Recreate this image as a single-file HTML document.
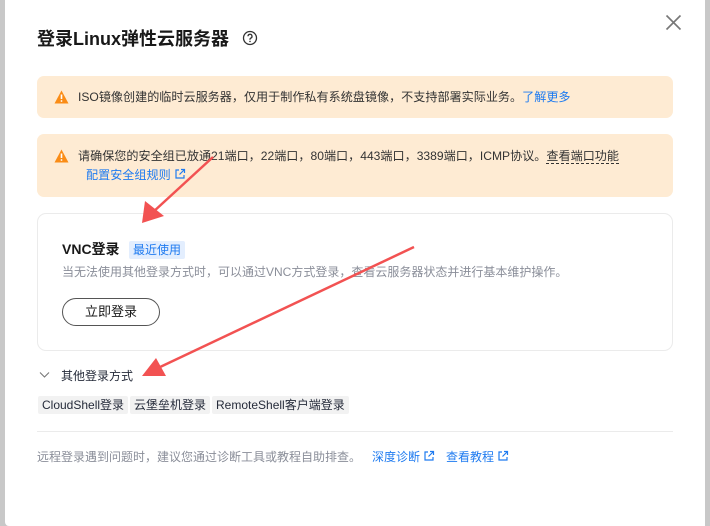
<!DOCTYPE html>
<html><head><meta charset="utf-8"><style>
*{margin:0;padding:0;box-sizing:border-box}
body{width:710px;height:526px;overflow:hidden;background:#c8c8c8;font-family:"Liberation Sans","Noto Sans CJK SC",sans-serif;position:relative;color:#252b3a}
.modal{position:absolute;left:5px;top:0;width:700px;height:526px;background:#fff;border-radius:0 0 0 4px}
.a{position:absolute}
.alert{position:absolute;left:37px;width:636px;background:#feebd3;border-radius:7px;font-size:12.1px;color:#333}
.link{color:#1f7bf0}
.tag{position:absolute;top:396px;height:18px;background:#f2f2f2;font-size:12px;line-height:18px;padding:0 4px;color:#252b3a;border-radius:2px}
</style></head><body>
<div class="modal"></div>
<div class="a" style="left:37px;top:27px;font-size:18px;font-weight:bold;color:#191919;line-height:24px">登录Linux弹性云服务器</div>
<svg class="a" style="left:242px;top:30px" width="16" height="16" viewBox="0 0 16 16"><circle cx="8" cy="8" r="6.5" fill="none" stroke="#333" stroke-width="1.3"/><path d="M6 6.3a2 2 0 1 1 2.6 1.9c-.5.2-.6.5-.6 1v.6" fill="none" stroke="#333" stroke-width="1.3"/><circle cx="8" cy="11.4" r=".8" fill="#333"/></svg>
<svg class="a" style="left:665px;top:14px" width="17" height="17" viewBox="0 0 17 17"><path d="M1.5 1.5L15.5 15.5M15.5 1.5L1.5 15.5" stroke="#777" stroke-width="1.6"/></svg>

<div class="alert" style="top:76px;height:42px">
<svg class="a" style="left:17px;top:14px" width="15" height="14" viewBox="0 0 15 14"><path d="M7.5 0.5L14.5 13.5H0.5Z" fill="#fa8c16"/><path d="M7.5 4.5v4.5" stroke="#fff" stroke-width="1.6"/><circle cx="7.5" cy="11" r=".9" fill="#fff"/></svg>
<div class="a" style="left:41px;top:12px;line-height:18px">ISO镜像创建的临时云服务器，仅用于制作私有系统盘镜像，不支持部署实际业务。<span class="link">了解更多</span></div>
</div>

<div class="alert" style="top:134px;height:63px">
<svg class="a" style="left:17px;top:15px" width="15" height="14" viewBox="0 0 15 14"><path d="M7.5 0.5L14.5 13.5H0.5Z" fill="#fa8c16"/><path d="M7.5 4.5v4.5" stroke="#fff" stroke-width="1.6"/><circle cx="7.5" cy="11" r=".9" fill="#fff"/></svg>
<div class="a" style="left:41px;top:13px;line-height:18px;white-space:nowrap">请确保您的安全组已放通21端口，22端口，80端口，443端口，3389端口，ICMP协议。<span style="border-bottom:1px dashed #333">查看端口功能</span></div>
<div class="a link" style="left:49px;top:32px;line-height:18px">配置安全组规则 <svg width="12" height="12" viewBox="0 0 12 12" style="vertical-align:-1px"><path d="M5 2H2v8h8V7M7 1.5h3.5V5M10.5 1.5L5.5 6.5" fill="none" stroke="#1f7bf0" stroke-width="1.2"/></svg></div>
</div>

<div class="a" style="left:37px;top:213px;width:636px;height:138px;border:1px solid #ebebeb;border-radius:9px"></div>
<div class="a" style="left:62px;top:240px;font-size:14px;font-weight:bold;line-height:18px;color:#191919">VNC登录</div>
<div class="a" style="left:129px;top:241px;width:56px;height:18px;background:#e3eefe;color:#1f7bf0;font-size:12px;line-height:18px;text-align:center;border-radius:2px">最近使用</div>
<div class="a" style="left:62px;top:264px;font-size:12px;color:#8a8e99;line-height:17px">当无法使用其他登录方式时，可以通过VNC方式登录，查看云服务器状态并进行基本维护操作。</div>
<div class="a" style="left:62px;top:298px;width:98px;height:28px;border:1px solid #555;border-radius:14px;font-size:13px;line-height:26px;text-align:center;color:#191919">立即登录</div>

<svg class="a" style="left:39px;top:371px" width="11" height="8" viewBox="0 0 11 8"><path d="M1 1.5l4.5 4.5 4.5-4.5" fill="none" stroke="#777" stroke-width="1.1"/></svg>
<div class="a" style="left:61px;top:368px;font-size:12px;line-height:17px;color:#252b3a">其他登录方式</div>
<div class="tag" style="left:38px">CloudShell登录</div>
<div class="tag" style="left:130px">云堡垒机登录</div>
<div class="tag" style="left:212px">RemoteShell客户端登录</div>

<div class="a" style="left:37px;top:431px;width:636px;height:1px;background:#ebebeb"></div>
<div class="a" style="left:37px;top:449px;font-size:12px;line-height:17px;color:#8a8e99">远程登录遇到问题时，建议您通过诊断工具或教程自助排查。</div>
<div class="a link" style="left:372px;top:449px;font-size:12px;line-height:17px">深度诊断 <svg width="12" height="12" viewBox="0 0 12 12" style="vertical-align:-1px"><path d="M5 2H2v8h8V7M7 1.5h3.5V5M10.5 1.5L5.5 6.5" fill="none" stroke="#1f7bf0" stroke-width="1.2"/></svg></div>
<div class="a link" style="left:446px;top:449px;font-size:12px;line-height:17px">查看教程 <svg width="12" height="12" viewBox="0 0 12 12" style="vertical-align:-1px"><path d="M5 2H2v8h8V7M7 1.5h3.5V5M10.5 1.5L5.5 6.5" fill="none" stroke="#1f7bf0" stroke-width="1.2"/></svg></div>

<svg class="a" style="left:0;top:0" width="710" height="526">
<line x1="213" y1="157" x2="152" y2="213" stroke="#f25252" stroke-width="2.5"/>
<polygon points="142,223 145,201 164,216" fill="#f25252"/>
<line x1="414" y1="247" x2="158" y2="368" stroke="#f25252" stroke-width="2.5"/>
<polygon points="142,376 156,358 166,376" fill="#f25252"/>
</svg>
</body></html>
